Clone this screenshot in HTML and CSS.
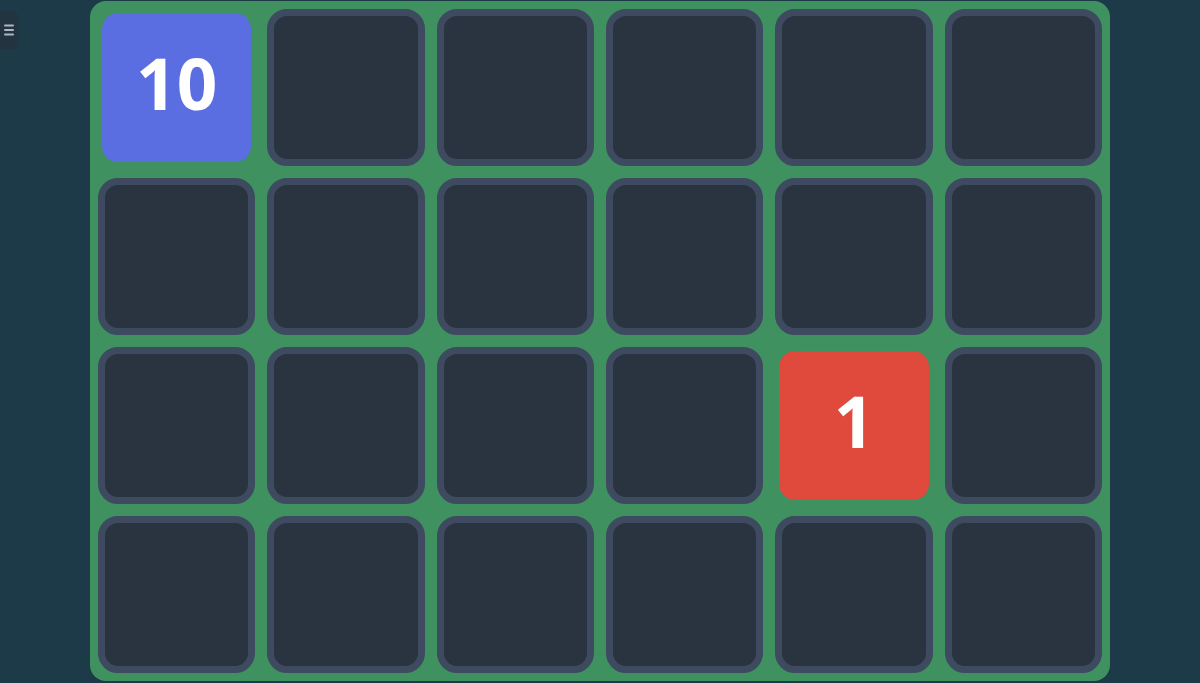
FILE: index.html
```html
<!DOCTYPE html>
<html>
<head>
<meta charset="utf-8">
<link rel="stylesheet" href="styles.css">
</head>
<body>
<button class="menu-btn" aria-label="menu">
  <svg width="10" height="12" viewBox="0 0 10 12"><path d="M1 1.5H9M1 6H9M1 10.5H9" stroke="#aeb6c2" stroke-width="2" stroke-linecap="round"/></svg>
</button>
<main class="stage">
  <div class="board">
    <div class="cell cell-filled"><div class="tile tile-blue">10</div></div>
    <div class="cell"></div><div class="cell"></div><div class="cell"></div><div class="cell"></div><div class="cell"></div>
    <div class="cell"></div><div class="cell"></div><div class="cell"></div><div class="cell"></div><div class="cell"></div><div class="cell"></div>
    <div class="cell"></div><div class="cell"></div><div class="cell"></div><div class="cell"></div>
    <div class="cell cell-filled"><div class="tile tile-red">1</div></div>
    <div class="cell"></div>
    <div class="cell"></div><div class="cell"></div><div class="cell"></div><div class="cell"></div><div class="cell"></div><div class="cell"></div>
  </div>
</main>
</body>
</html>
```
FILE: styles.css
```css
html, body {
  margin: 0;
  padding: 0;
  height: 100%;
}
body {
  background: #1c3a47;
  font-family: "Open Sans", "Noto Sans", sans-serif;
  overflow: hidden;
}
.menu-btn {
  position: fixed;
  left: -10px;
  top: 11px;
  width: 28px;
  height: 38px;
  border: none;
  border-radius: 7px;
  background: #243340;
  padding: 0 0 0 14px;
  display: flex;
  align-items: center;
  justify-content: flex-start;
}
.stage {
  height: 683px;
  box-sizing: border-box;
  padding-top: 1px;
  display: flex;
  align-items: flex-start;
  justify-content: center;
}
.board {
  width: 1020px;
  height: 680px;
  box-sizing: border-box;
  padding: 8px;
  background: #3f9160;
  border-radius: 16px;
  display: grid;
  grid-template-columns: repeat(6, 1fr);
  grid-template-rows: repeat(4, 1fr);
  gap: 12px;
}
.cell {
  box-sizing: border-box;
  background: #2a3340;
  border: 7px solid #3e4a5f;
  border-radius: 20px;
  position: relative;
}
.cell-filled {
  background: transparent;
  border-color: transparent;
}
.tile {
  position: absolute;
  inset: -3px;
  border-radius: 16px;
  display: flex;
  align-items: center;
  justify-content: center;
  color: #ffffff;
  font-weight: 700;
  font-size: 71px;
  line-height: 1;
  padding-bottom: 10px;
  box-sizing: border-box;
}
.tile-blue { background: #5b6ee1; }
.tile-red { background: #df4a3c; }
```
